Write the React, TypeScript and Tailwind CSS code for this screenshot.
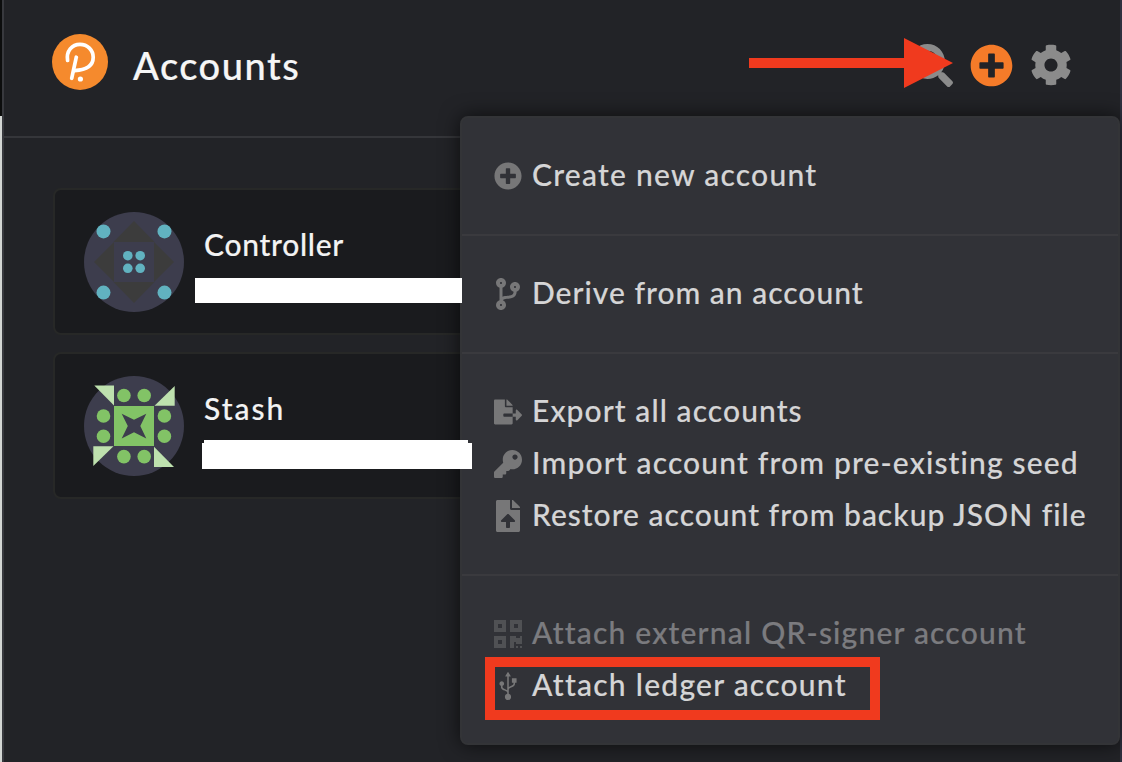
import type { ReactNode } from 'react';
import {
  FaCodeBranch,
  FaCog,
  FaFileExport,
  FaFileUpload,
  FaKey,
  FaPlusCircle,
  FaQrcode,
  FaSearch,
  FaUsb,
} from 'react-icons/fa';

function Logo() {
  return (
    <svg viewBox="0 0 56 56" className="size-14 shrink-0">
      <circle cx="28" cy="28" r="28" fill="#f58a2d" />
      <g fill="none" stroke="#fff" strokeWidth="3.7" strokeLinecap="round">
        <path d="M15.6 26.5 C14 17 20 10.3 28 10.3 C35.5 10.3 41.2 16 41.2 23.3 C41.2 31 35 36 22.5 36.6" />
        <path d="M24.3 23.2 L19.7 44.3" />
      </g>
      <circle cx="28.4" cy="45" r="2.6" fill="#fff" />
    </svg>
  );
}

function ControllerIcon() {
  return (
    <svg viewBox="84 212 100 100" className="size-[100px] shrink-0">
      <circle cx="134" cy="262" r="50" fill="#3d3d4d" />
      <g fill="#3c3c3c">
        <path d="M134 221 L154.5 242 H113.5 Z" />
        <path d="M134 303 L154.5 282 H113.5 Z" />
        <path d="M94 262 L114 242 V282 Z" />
        <path d="M174 262 L154 242 V282 Z" />
      </g>
      <g fill="#61b2c0">
        <circle cx="103.5" cy="231.4" r="7" />
        <circle cx="164.5" cy="231.4" r="7" />
        <circle cx="103.5" cy="292.6" r="7" />
        <circle cx="164.5" cy="292.6" r="7" />
        <circle cx="127.8" cy="255.7" r="4.8" />
        <circle cx="140.2" cy="255.7" r="4.8" />
        <circle cx="127.8" cy="268.3" r="4.8" />
        <circle cx="140.2" cy="268.3" r="4.8" />
      </g>
    </svg>
  );
}

function StashIcon() {
  return (
    <svg viewBox="84 376 100 100" className="size-[100px] shrink-0">
      <circle cx="134" cy="426" r="50" fill="#3d3d4d" />
      <g fill="#bee1ae">
        <path d="M94.3 385.5 H114 V405.5 Z" />
        <path d="M174.7 386 V405.7 H154.5 Z" />
        <path d="M93.3 446.3 H113.5 L93.3 466 Z" />
        <path d="M154 446.7 V467 H174 Z" />
      </g>
      <g fill="#82c366">
        <rect x="114" y="406" width="40" height="40" />
        <circle cx="123.9" cy="395.5" r="6.8" />
        <circle cx="144.2" cy="395.5" r="6.8" />
        <circle cx="103.5" cy="416" r="6.8" />
        <circle cx="103.5" cy="436.2" r="6.8" />
        <circle cx="164.4" cy="416" r="6.8" />
        <circle cx="164.4" cy="436.2" r="6.8" />
        <circle cx="123.9" cy="456.6" r="6.8" />
        <circle cx="144.2" cy="456.6" r="6.8" />
      </g>
      <path
        d="M121.7 413.7 L134 419.7 L146.3 413.7 L140.3 426 L146.3 438.5 L134 432.3 L121.7 438.5 L127.8 426 Z"
        fill="#3d3d4d"
      />
    </svg>
  );
}

function AccountCard({ icon, name, tracking }: { icon: ReactNode; name: string; tracking: string }) {
  return (
    <div className="flex h-[147px] rounded-lg border-2 border-[#272827] bg-[#1a1b1e] pt-[22px] pl-[29px]">
      {icon}
      <div className={`pt-[14px] pl-5 text-[30px] leading-9 text-[#f3f3f3] [-webkit-text-stroke:0.15px] ${tracking}`}>{name}</div>
    </div>
  );
}

function MenuItem({
  icon,
  tracking,
  disabled = false,
  children,
}: {
  icon: ReactNode;
  tracking: string;
  disabled?: boolean;
  children: ReactNode;
}) {
  return (
    <div className={`flex h-[52px] items-center pl-8 ${disabled ? 'opacity-45' : ''}`}>
      <span className="flex w-7 shrink-0 justify-center text-[#777778]">{icon}</span>
      <span
        className={`ml-[10px] pb-[5px] text-[30px] leading-none whitespace-nowrap text-[#d5d5d6] [-webkit-text-stroke:0.15px] ${tracking}`}
      >
        {children}
      </span>
    </div>
  );
}

export default function App() {
  return (
    <div className="relative flex h-[762px] w-[1122px] overflow-hidden bg-[#222327] font-['Lato',sans-serif] font-medium">
      <div className="flex w-[2px] shrink-0 flex-col">
        <div className="h-[116px] bg-[#0c0d0d]" />
        <div className="flex-1 bg-[#d3d6d3]" />
      </div>
      <div className="w-[2px] shrink-0 bg-[#38393e]" />

      <div className="flex min-w-0 flex-1 flex-col">
        <header className="flex h-[138px] shrink-0 border-b-2 border-[#35363a] pt-[34px] pr-[48px] pl-12">
          <Logo />
          <h1 className="mt-[10px] ml-[25px] text-[38px] leading-[42px] tracking-[1.5px] text-[#f6f6f6] [-webkit-text-stroke:0.2px]">
            Accounts
          </h1>
          <div className="mt-[10px] ml-auto flex h-[42px] items-center gap-[17px] text-[#8b8b8b]">
            <FaSearch size={43} />
            <FaPlusCircle size={43} className="text-[#f57b29]" />
            <FaCog size={42} />
          </div>
        </header>
        <main className="flex flex-col gap-[17px] pt-[50px] pr-12 pl-[49px]">
          <AccountCard icon={<ControllerIcon />} name="Controller" tracking="tracking-[0.7px]" />
          <AccountCard icon={<StashIcon />} name="Stash" tracking="tracking-[2px]" />
        </main>
      </div>
      <div className="w-[2px] shrink-0 bg-[#2f303f]" />

      <nav className="absolute top-[116px] left-[460px] w-[660px] divide-y-2 divide-[#3a3a3e] rounded-lg border-2 border-[#333437] bg-[#313237] shadow-[0_0_20px_rgba(0,0,0,0.65)]">
        <section className="py-8">
          <MenuItem icon={<FaPlusCircle size={28} />} tracking="tracking-[1.25px]">Create new account</MenuItem>
        </section>
        <section className="py-8">
          <MenuItem icon={<FaCodeBranch size={32} />} tracking="tracking-[1px]">Derive from an account</MenuItem>
        </section>
        <section className="py-8">
          <MenuItem icon={<FaFileExport size={28} />} tracking="tracking-[1.08px]">Export all accounts</MenuItem>
          <MenuItem icon={<FaKey size={28} />} tracking="tracking-[1.15px]">Import account from pre-existing seed</MenuItem>
          <MenuItem icon={<FaFileUpload size={32} />} tracking="tracking-[1px]">Restore account from backup JSON file</MenuItem>
        </section>
        <section className="pt-8 pb-[31px]">
          <MenuItem icon={<FaQrcode size={32} />} tracking="tracking-[1.2px]" disabled>Attach external QR-signer account</MenuItem>
          <MenuItem icon={<FaUsb size={28} className="-rotate-90" />} tracking="tracking-[1.25px]">Attach ledger account</MenuItem>
        </section>
      </nav>

      <div className="absolute top-[278px] left-[195px] h-[25px] w-[267px] bg-white" />
      <div className="absolute top-[440px] left-[204px] h-[4px] w-[264px] bg-white" />
      <div className="absolute top-[443px] left-[202px] h-[26px] w-[270px] bg-white" />
      <svg viewBox="0 0 204 50" className="absolute top-[38px] left-[749px] h-[50px] w-[204px]" fill="#f03a1e">
        <path d="M0 20 H155 V0 L204 25 L155 50 V30 H0 Z" />
      </svg>
      <div className="absolute top-[657px] left-[485px] h-[63px] w-[395px] border-[10px] border-[#f03a1e]" />
    </div>
  );
}
